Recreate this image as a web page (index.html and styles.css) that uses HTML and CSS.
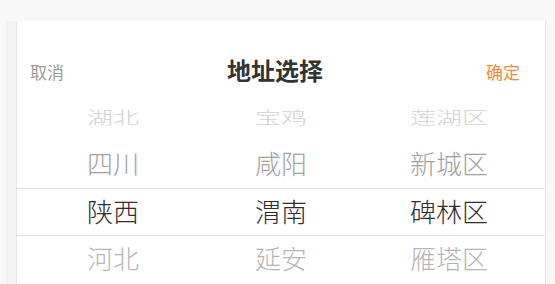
FILE: index.html
```html
<!DOCTYPE html>
<html lang="zh-CN">
<head>
  <meta charset="UTF-8">
  <meta name="viewport" content="width=device-width, initial-scale=1.0">
  <title>地址选择</title>
  <link rel="stylesheet" href="styles.css">
</head>
<body>
  <div class="page">
    <div class="picker">
      <div class="picker-header">
        <span class="btn btn-cancel">取消</span>
        <span class="title">地址选择</span>
        <span class="btn btn-ok">确定</span>
      </div>
      <div class="picker-body">
        <div class="row row-far">
          <span>湖北</span><span>宝鸡</span><span>莲湖区</span>
        </div>
        <div class="row row-near">
          <span>四川</span><span>咸阳</span><span>新城区</span>
        </div>
        <div class="row row-active">
          <span>陕西</span><span>渭南</span><span>碑林区</span>
        </div>
        <div class="row row-next">
          <span>河北</span><span>延安</span><span>雁塔区</span>
        </div>
      </div>
    </div>
  </div>
</body>
</html>
```

FILE: styles.css
```css
html, body {
  margin: 0;
  padding: 0;
}
body {
  background: #f8f8f8;
  font-family: "Noto Sans CJK SC", "Noto Sans", sans-serif;
  overflow: hidden;
}
.page {
  padding: 21px 0 0 6px;
  width: 549px;
}
.picker {
  margin-left: 10px;
  width: 528px;
  background: #fff;
  border-left: 1px solid #e6e6e6;
  border-right: 1px solid #e6e6e6;
  box-shadow: -10px 0 0 #f3f3f3;
  height: 300px;
}
.picker-header {
  display: flex;
  align-items: center;
  justify-content: space-between;
  height: 48px;
  padding: 25px 25px 0 13px;
}
.btn {
  font-size: 17px;
  color: #9c9c9c;
  margin-top: 3px;
}
.btn-ok {
  color: #f88a3b;
}
.title {
  font-size: 24px;
  font-weight: bold;
  color: #333;
  margin-top: -1px;
}
.picker-body {
  padding: 0 12px;
}
.row {
  display: grid;
  grid-template-columns: repeat(3, 1fr);
  height: 47px;
  align-items: center;
  font-size: 26px;
  font-weight: 300;
}
.row > span {
  text-align: center;
  line-height: 43px;
  padding-bottom: 4px;
}
.row-far {
  color: #d2d2d2;
  transform: scaleY(0.64);
}
.row-near {
  color: #a2a2a2;
}
.row-active {
  color: #2e2e2e;
  border-top: 1px solid #e5e5e5;
  border-bottom: 1px solid #e5e5e5;
  margin: 0 -12px;
  padding: 0 12px;
  height: 46px;
}
.row-next {
  color: #b6b6b6;
}
```
